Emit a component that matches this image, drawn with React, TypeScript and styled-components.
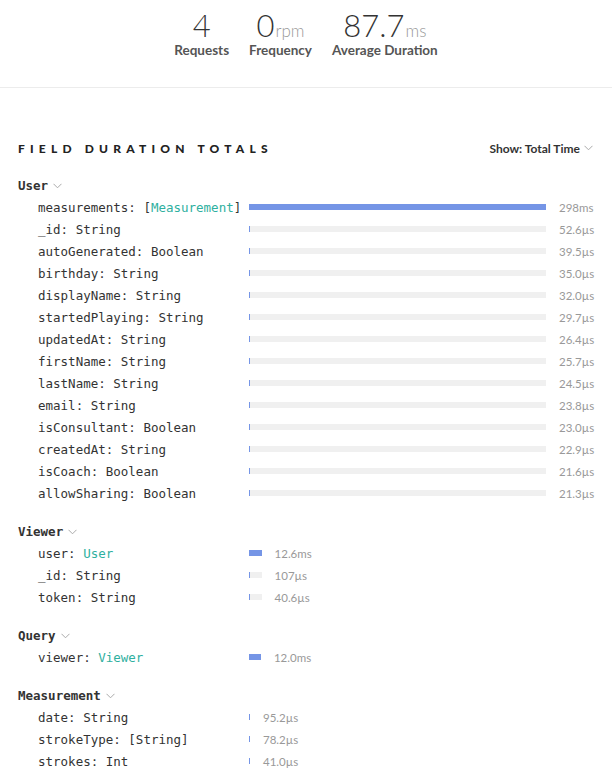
import React from "react"
import styled, { createGlobalStyle } from "styled-components"

const GlobalStyle = createGlobalStyle`
  html, body {
    margin: 0;
    padding: 0;
    background: #fff;
    font-family: Lato, "Open Sans", sans-serif;
    color: #333;
  }
`

type Field = { name: string; type: string; list?: boolean; link?: boolean; value: number }
type Group = { name: string; fields: Field[] }

const MAX = 298000 // microseconds
const TRACK = 297

const groups: Group[] = [
  {
    name: "User",
    fields: [
      { name: "measurements", type: "Measurement", list: true, link: true, value: 298000 },
      { name: "_id", type: "String", value: 52.6 },
      { name: "autoGenerated", type: "Boolean", value: 39.5 },
      { name: "birthday", type: "String", value: 35.0 },
      { name: "displayName", type: "String", value: 32.0 },
      { name: "startedPlaying", type: "String", value: 29.7 },
      { name: "updatedAt", type: "String", value: 26.4 },
      { name: "firstName", type: "String", value: 25.7 },
      { name: "lastName", type: "String", value: 24.5 },
      { name: "email", type: "String", value: 23.8 },
      { name: "isConsultant", type: "Boolean", value: 23.0 },
      { name: "createdAt", type: "String", value: 22.9 },
      { name: "isCoach", type: "Boolean", value: 21.6 },
      { name: "allowSharing", type: "Boolean", value: 21.3 },
    ],
  },
  {
    name: "Viewer",
    fields: [
      { name: "user", type: "User", link: true, value: 12600 },
      { name: "_id", type: "String", value: 107 },
      { name: "token", type: "String", value: 40.6 },
    ],
  },
  {
    name: "Query",
    fields: [{ name: "viewer", type: "Viewer", link: true, value: 12000 }],
  },
  {
    name: "Measurement",
    fields: [
      { name: "date", type: "String", value: 95.2 },
      { name: "strokeType", type: "String", list: true, value: 78.2 },
      { name: "strokes", type: "Int", value: 41.0 },
    ],
  },
]

const formatTime = (us: number) => {
  if (us >= 100000) return `${Math.round(us / 1000)}ms`
  if (us >= 1000) return `${(us / 1000).toFixed(1)}ms`
  if (us >= 100) return `${Math.round(us)}µs`
  return `${us.toFixed(1)}µs`
}

const Chevron = () => (
  <svg width="9" height="6" viewBox="0 0 9 6">
    <path d="M0.5 0.8 L4.5 4.8 L8.5 0.8" fill="none" stroke="#aaa" strokeWidth="1" />
  </svg>
)

const App = () => {
  return (
    <>
      <GlobalStyle />
      <Stats>
        <Stat>
          <Number>4</Number>
          <Label>Requests</Label>
        </Stat>
        <Stat>
          <Number>
            0<Unit>rpm</Unit>
          </Number>
          <Label>Frequency</Label>
        </Stat>
        <Stat>
          <Number>
            87.7<Unit>ms</Unit>
          </Number>
          <Label>Average Duration</Label>
        </Stat>
      </Stats>

      <Section>
        <TitleRow>
          <Title>Field Duration Totals</Title>
          <Show>
            Show: Total Time <Chevron />
          </Show>
        </TitleRow>

        {groups.map((group) => {
          const groupMax = Math.max(...group.fields.map((f) => f.value))
          const trackWidth = Math.max(1, (groupMax / MAX) * TRACK)
          return (
            <GroupBlock key={group.name}>
              <GroupHeader>
                {group.name} <Chevron />
              </GroupHeader>
              {group.fields.map((field) => (
                <Row key={field.name}>
                  <FieldName>
                    {field.name}: {field.list && "["}
                    <TypeName $link={field.link}>{field.type}</TypeName>
                    {field.list && "]"}
                  </FieldName>
                  <Track style={{ width: trackWidth }}>
                    <Bar style={{ width: Math.max(1, (field.value / MAX) * TRACK) }} />
                  </Track>
                  <Value>{formatTime(field.value)}</Value>
                </Row>
              ))}
            </GroupBlock>
          )
        })}
      </Section>
    </>
  )
}

export default App

const Stats = styled.div`
  height: 79px;
  padding-top: 8px;
  border-bottom: 1px solid #ececec;
  display: flex;
  justify-content: center;
  align-items: flex-start;
  gap: 20px;
`

const Stat = styled.div`
  display: flex;
  flex-direction: column;
  align-items: center;
`

const Number = styled.div`
  height: 34px;
  font-size: 31px;
  font-weight: 300;
  line-height: 34px;
  color: #333;
`

const Unit = styled.span`
  font-size: 17px;
  line-height: 0;
  color: #999;
  margin-left: 1px;
`

const Label = styled.div`
  font-size: 13.5px;
  font-weight: 700;
  line-height: 16px;
  color: #555;
`

const Section = styled.div`
  padding: 52px 19px 0 18px;
`

const TitleRow = styled.div`
  display: flex;
  justify-content: space-between;
  align-items: center;
  height: 16px;
  margin-bottom: 19px;
`

const Title = styled.h2`
  margin: 0;
  font-size: 12px;
  font-weight: 900;
  text-transform: uppercase;
  letter-spacing: 5.2px;
  color: #222;
`

const Show = styled.div`
  display: flex;
  align-items: center;
  gap: 4px;
  font-size: 12px;
  font-weight: 700;
  color: #333;
`

const GroupBlock = styled.div`
  & + & {
    margin-top: 17px;
  }
`

const GroupHeader = styled.div`
  display: flex;
  align-items: center;
  gap: 5px;
  height: 21px;
  font-family: "DejaVu Sans Mono", monospace;
  font-size: 12.5px;
  font-weight: 700;
  color: #333;
`

const Row = styled.div`
  display: flex;
  align-items: center;
  height: 22px;
  padding-left: 20px;
`

const FieldName = styled.div`
  width: 211px;
  flex-shrink: 0;
  font-family: "DejaVu Sans Mono", monospace;
  font-size: 12.5px;
  color: #333;
  white-space: pre;
`

const TypeName = styled.span<{ $link?: boolean }>`
  color: ${({ $link }) => ($link ? "#2fb0a0" : "#333")};
`

const Track = styled.div`
  height: 6px;
  background: #f0f0f0;
  flex-shrink: 0;
`

const Bar = styled.div`
  height: 6px;
  background: #7595e6;
`

const Value = styled.div`
  margin-left: 13px;
  font-size: 11.5px;
  color: #999;
`
